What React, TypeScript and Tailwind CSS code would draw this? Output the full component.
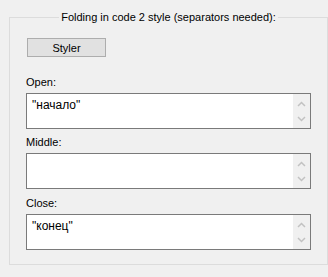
const font = "font-['Liberation_Sans',Arial,sans-serif]";

function ScrollArrows() {
  return (
    <div className="w-[17px] bg-[#f0f0f0]">
      <svg width="17" height="34" viewBox="0 0 17 34" className="block">
        <path d="M5 12 L8.5 8.5 L12 12" fill="none" stroke="#c2c2c2" strokeWidth="1.5" />
        <path d="M5 23 L8.5 26.5 L12 23" fill="none" stroke="#c2c2c2" strokeWidth="1.5" />
      </svg>
    </div>
  );
}

function TextBox({ value }: { value?: string }) {
  return (
    <div className="w-[285px] h-[36px] border border-[#7a7a7a] bg-white flex">
      <div className="flex-1 pl-[5px] pt-[3px] leading-[16px] text-[12px]">{value}</div>
      <ScrollArrows />
    </div>
  );
}

export default function App() {
  return (
    <div className={`w-[328px] h-[277px] bg-[#f0f0f0] pt-[9px] pl-[9px] text-[11px] text-black ${font}`}>
      <fieldset className="w-[315px] h-[256px] border border-[#dcdcdc] px-[16px]">
        <legend className="mx-auto px-[2px] leading-[16px]">
          Folding in code 2 style (separators needed):
        </legend>
        <button className="block mt-[13px] ml-[1px] w-[79px] h-[19px] border border-[#adadad] bg-[#e1e1e1] leading-[16px]">
          Styler
        </button>
        <div className="mt-[17px] leading-[16px]">Open:</div>
        <div className="mt-[3px]">
          <TextBox value={'"начало"'} />
        </div>
        <div className="mt-[5px] leading-[16px]">Middle:</div>
        <div className="mt-[3px]">
          <TextBox />
        </div>
        <div className="mt-[6px] leading-[16px]">Close:</div>
        <div className="mt-[3px]">
          <TextBox value={'"конец"'} />
        </div>
      </fieldset>
    </div>
  );
}
